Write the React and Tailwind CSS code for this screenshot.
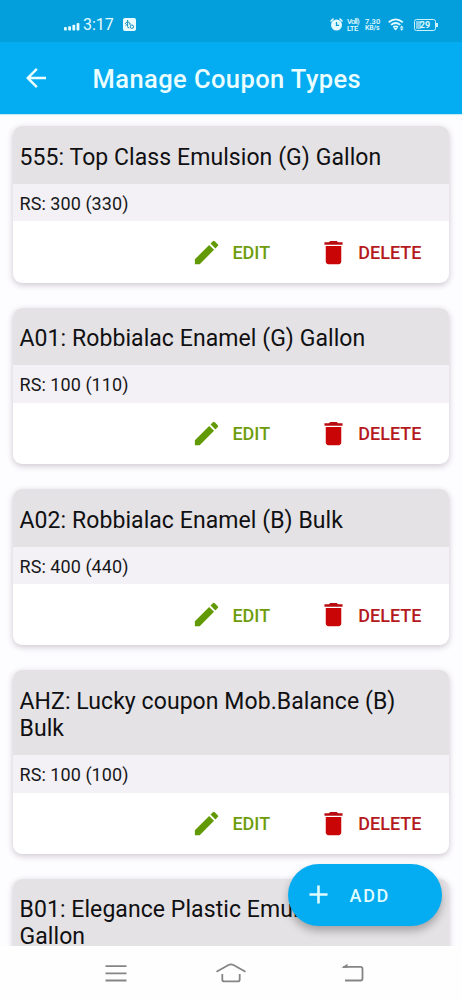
import React from "react";

const coupons = [
  { title: ["555: Top Class Emulsion (G) Gallon"], price: "RS: 300 (330)" },
  { title: ["A01: Robbialac Enamel (G) Gallon"], price: "RS: 100 (110)" },
  { title: ["A02: Robbialac Enamel (B) Bulk"], price: "RS: 400 (440)" },
  { title: ["AHZ: Lucky coupon Mob.Balance (B)", "Bulk"], price: "RS: 100 (100)" },
  { title: ["B01: Elegance Plastic Emulsion (G)", "Gallon"], price: "RS: 200 (220)" },
];

const StatusBar = () => (
  <div className="h-[42px] shrink-0 bg-[#039fdc] text-[#e4fbff] flex items-center pt-[7px] pl-16 pr-[26px]">
    {/* Signal strength */}
    <svg width="16" height="8" viewBox="0 0 16 8" fill="currentColor" className="mt-[5px]">
      <rect x="0" y="4" width="2.8" height="3.5" rx=".8" />
      <rect x="4.2" y="3.3" width="2.8" height="4.2" rx=".8" />
      <rect x="8.4" y="1.8" width="2.8" height="5.7" rx=".8" />
      <rect x="12.6" y="0" width="2.8" height="7.5" rx=".8" />
    </svg>
    <span className="ml-[3px] mt-px w-[31px] whitespace-nowrap text-[16px] leading-none">3:17</span>
    <svg width="13" height="13" viewBox="0 0 13 13" className="ml-[9px]">
      <rect width="13" height="13" rx="2" fill="#e9fcff" />
      <path d="M4.6 2v6.4q0 1.7 1.6 1.5M2 5.8l2.6-2.4 2.5 2.1M2.5 7.4l2-1.3M6 6h1.8" stroke="#168fbd" fill="none" />
      <circle cx="8.9" cy="8.7" r="1.7" stroke="#168fbd" fill="none" />
    </svg>

    <div className="ml-auto flex items-center">
      {/* Alarm */}
      <svg width="13" height="13" viewBox="0 0 13 13">
        <path d="M1 3 3 1M10 1l2 2" stroke="currentColor" strokeWidth="1.6" strokeLinecap="round" />
        <circle cx="6.5" cy="7" r="5.5" fill="currentColor" />
        <path d="M6.5 4v3.3h2.6" stroke="#039fdc" strokeWidth="1.3" fill="none" />
      </svg>
      <div className="ml-[4px] w-[12px] whitespace-nowrap text-[7.5px] leading-[7px] font-medium">
        <div className="tracking-[-0.7px]">Voll)</div>
        <div className="tracking-[-0.3px]">LTE</div>
      </div>
      <div className="ml-[6px] w-[16px] whitespace-nowrap text-[7.5px] leading-[7px] font-medium">
        <div className="tracking-[0.1px]">7.30</div>
        <div className="text-[7px] tracking-[-0.2px]">KB/s</div>
      </div>
      {/* Wifi */}
      <svg width="17" height="13" viewBox="0 0 17 13" fill="none" stroke="currentColor" strokeWidth="1.8" className="ml-[7px]">
        <path d="M.7 4.2Q7.5-1.4 14.8 4.2M3 6.9q4.6-3.7 9.4 0M5.2 9.3q2.4-1.9 4.8 0" />
        <path d="m5.4 10.1 2.2 2.5 2.2-2.5z" fill="currentColor" stroke="none" />
        <path d="m11.9 9.7 1.8-2.2 1.8 2.2zM11.9 10.5l1.8 2.2 1.8-2.2z" fill="currentColor" stroke="none" />
      </svg>
      {/* Battery */}
      <div className="ml-[9px] relative flex h-[12px] w-[22px] items-center justify-center rounded-[2.5px] border border-[#c9f2fd] text-[9px] leading-none font-bold">
        <div className="absolute left-px top-px bottom-px w-[5px] bg-[#7fd0ee]" />
        <span className="relative pt-px">29</span>
        <div className="absolute -right-[2.5px] top-[3px] h-[4px] w-[1.5px] bg-[#c9f2fd]" />
      </div>
    </div>
  </div>
);

const AppBar = () => (
  <div className="h-[72px] shrink-0 bg-[#04acf1] flex items-center pl-[21px] text-[#eafdff] shadow-[0_1px_1px_#c5ebf8] z-10">
    <svg width="30" height="30" viewBox="0 0 24 24" fill="currentColor">
      <path d="M20 11H7.83l5.59-5.59L12 4l-8 8 8 8 1.41-1.41L7.83 13H20v-2z" />
    </svg>
    <h1 className="ml-[41.5px] mt-[4px] whitespace-nowrap text-[25.5px] leading-none font-medium tracking-[0.42px]">
      Manage Coupon Types
    </h1>
  </div>
);

const CouponCard = ({ coupon }) => (
  <div className="shrink-0 rounded-[9px] bg-white shadow-[0_2px_6px_rgba(50,35,60,0.24)] overflow-hidden">
    <div className="bg-[#e4e2e5] pl-[6.5px] pt-[17.5px] pb-[13.3px] text-[23px] leading-[27px] text-[#101012]">
      {coupon.title.map((line) => (
        <div key={line} className="whitespace-nowrap tracking-[0.07px]">{line}</div>
      ))}
    </div>
    <div className="h-[37.3px] bg-[#f3f1f5] pl-[6.5px] pt-[2px] flex items-center text-[18px] leading-none tracking-[0.06px] text-[#18181a]">
      {coupon.price}
    </div>
    <div className="h-[61.3px] flex items-center pl-[178.3px] text-[18px] leading-none font-medium">
      <button className="flex items-center text-[#6d9d0c]">
        <svg width="31" height="31" viewBox="0 0 24 24" fill="#629a05">
          <path d="M3 17.25V21h3.75L17.81 9.94l-3.75-3.75L3 17.25zM20.71 7.04a1 1 0 0 0 0-1.41l-2.34-2.34a1 1 0 0 0-1.41 0l-1.83 1.83 3.75 3.75 1.83-1.83z" />
        </svg>
        <span className="ml-[10px] mt-[2px] w-[38px] whitespace-nowrap">EDIT</span>
      </button>
      <button className="ml-[47.5px] flex items-center text-[#b51920]">
        <svg width="31" height="31" viewBox="0 0 24 24" fill="#c90505">
          <path d="M6 19c0 1.1.9 2 2 2h8c1.1 0 2-.9 2-2V7H6v12z" />
          <path d="M19 4h-3.5l-1-1h-5l-1 1H5v2h14V4z" fill="#b90c10" />
        </svg>
        <span className="ml-[9.5px] mt-[2px] whitespace-nowrap">DELETE</span>
      </button>
    </div>
  </div>
);

const NavBar = () => (
  <div className="h-[54px] shrink-0 bg-[#fefefe] flex items-center pl-[105px] text-[#858585]">
    <svg width="22" height="20" viewBox="0 0 22 20" fill="none" stroke="currentColor" strokeWidth="1.8">
      <path d="M.5 3.2h21M.5 10.4h21M.5 17.5h21" />
    </svg>
    <svg width="32" height="20" viewBox="0 0 32 20" fill="none" stroke="currentColor" strokeWidth="1.8" className="ml-[88px]">
      <path d="M1.5 8.7 13.5 2q2.5-1.4 5 0l12 6.7M7.3 11v5.4q0 2 2 2h13.4q2 0 2-2V11" />
    </svg>
    <svg width="24" height="20" viewBox="0 0 24 20" fill="none" stroke="currentColor" strokeWidth="1.8" className="ml-[94px]">
      <path d="M2 3.9h17.5q2 0 2 2v9.6q0 2-2 2H4" />
      <path d="M.5 4.8 6.5.8v4z" fill="currentColor" stroke="none" />
    </svg>
  </div>
);

const App = () => {
  return (
    <div className="h-[1000px] w-[462px] flex flex-col overflow-hidden bg-[#fdfcfe] font-[Roboto,sans-serif]">
      <StatusBar />
      <AppBar />

      <div className="relative min-h-0 flex-1 overflow-hidden">
        {/* Coupon list */}
        <div className="flex flex-col gap-[25px] pt-[12.3px] pl-[13px] pr-[13px]">
          {coupons.map((c) => (
            <CouponCard key={c.title[0]} coupon={c} />
          ))}
        </div>

        {/* Floating add button */}
        <button className="absolute right-[20.5px] bottom-[20.5px] h-[61.5px] w-[154px] rounded-full bg-[#04acf1] text-[#dffbff] flex items-center pl-[15px] shadow-[0_5px_9px_rgba(0,0,0,0.28)]">
          <svg width="31" height="31" viewBox="0 0 24 24" fill="currentColor">
            <path d="M19 13h-6v6h-2v-6H5v-2h6V5h2v6h6v2z" />
          </svg>
          <span className="ml-[16px] mt-[2px] text-[18px] leading-none font-medium tracking-[1.7px]">ADD</span>
        </button>
      </div>

      <NavBar />
    </div>
  );
};

export default App;
